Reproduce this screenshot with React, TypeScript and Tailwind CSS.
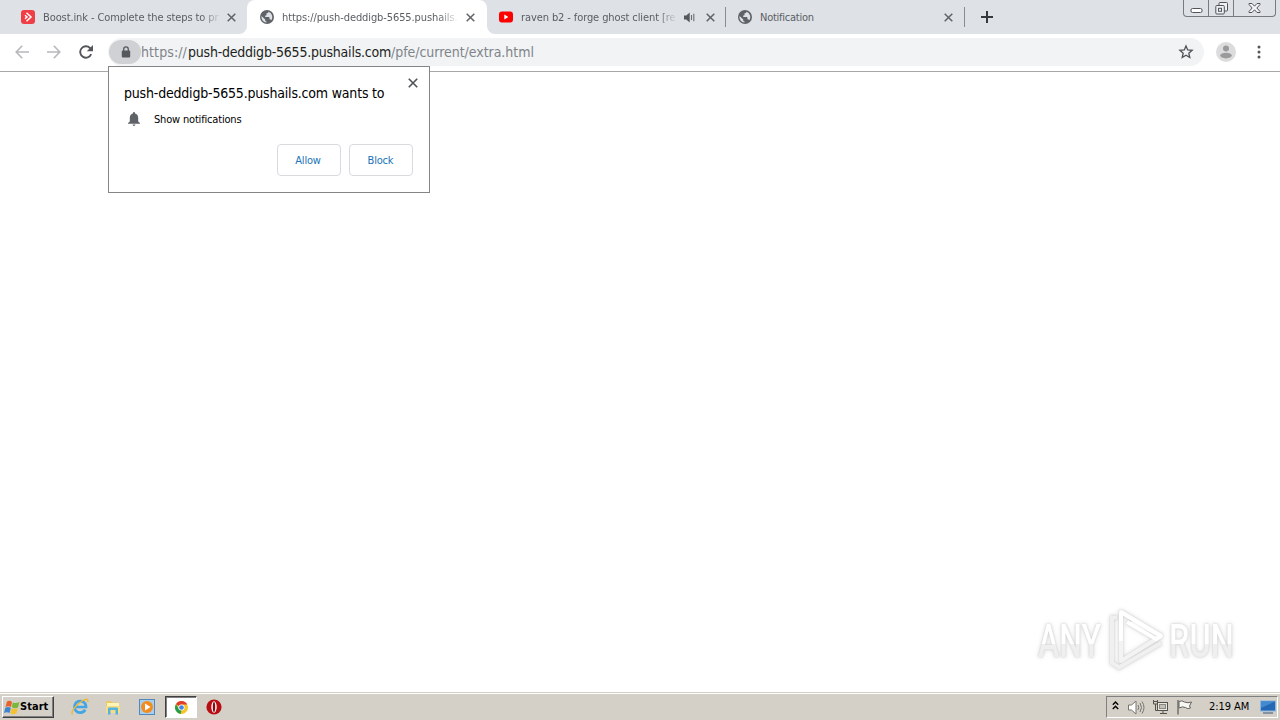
import React from "react";

const Close = ({ size = 9, color = "#5f6368" }: { size?: number; color?: string }) => (
  <svg width={size} height={size} viewBox="0 0 9 9" className="shrink-0">
    <path d="M.7.7l7.6 7.6M8.3.7L.7 8.3" stroke={color} strokeWidth="1.5" />
  </svg>
);

const Globe = () => (
  <svg width="14" height="14" viewBox="0 0 14 14" className="shrink-0">
    <circle cx="7" cy="7" r="7" fill="#5f6368" />
    <path d="M8.5 1.800c-.2 1-.8 1.500-2 1.500v1.400c0 .7-.6.9-1.300.9v1.300h3.400c.7 0 .9.5.9 1.200v1.200c.9 0 1.500.3 1.800.9A5.600 5.600 0 0 0 8.500 1.800z" fill="#dee1e6" />
    <path d="M1.500 5.900l3.700 3.700v.7c0 .8.6 1.300 1.400 1.300v1A5.600 5.600 0 0 1 1.500 5.900z" fill="#dee1e6" />
  </svg>
);

const Title = ({ children, className }: { children: React.ReactNode; className: string }) => (
  <span
    className={`pt-px whitespace-nowrap text-[11px] leading-[17px] text-[#5a5e63] ${className}`}
  >
    {children}
  </span>
);

const fade = "[mask-image:linear-gradient(to_right,#000_88%,transparent)]";

function TabStrip() {
  return (
    <div className="flex h-[34px] bg-[#dee1e6]">
      <div className="flex w-[247px] items-center pl-[21px]">
        <svg width="14" height="14" viewBox="0 0 14 14" className="shrink-0">
          <rect width="14" height="14" rx="3" fill="#ef3e46" />
          <path d="M5.500 2.800L10 7 5.500 11.200M4 5.200L6 7 4 8.800" fill="none" stroke="#fff" strokeWidth="1.500" />
        </svg>
        <Title className={`ml-2 w-[179px] tracking-[-0.1px] ${fade}`}>Boost.ink - Complete the steps to pr</Title>
        <span className="ml-[5px] flex"><Close /></span>
      </div>
      <div className="relative flex w-[240px] items-center rounded-t-lg bg-white pl-[13px]">
        <svg width="8" height="8" className="absolute bottom-0 -left-2"><path d="M8 0v8H0a8 8 0 0 0 8-8z" fill="#fff" /></svg>
        <svg width="8" height="8" className="absolute -right-2 bottom-0"><path d="M0 0v8h8a8 8 0 0 1-8-8z" fill="#fff" /></svg>
        <Globe />
        <Title className={`ml-2 w-[177px] tracking-[-0.1px] ${fade}`}>https://push-deddigb-5655.pushails.</Title>
        <span className="ml-[7px] flex"><Close /></span>
      </div>
      <div className="flex w-[238px] items-center pl-[12px]">
        <svg width="14" height="12" viewBox="0 0 15 12" preserveAspectRatio="none" className="shrink-0">
          <rect y=".5" width="15" height="11" rx="3" fill="#f00" />
          <path d="M5.700 3.500v5L10 6z" fill="#fff" />
        </svg>
        <Title className={`ml-[8px] w-[156px] tracking-[-0.1px] ${fade}`}>raven b2 - forge ghost client [re</Title>
        <svg width="11" height="11" viewBox="0 0 11 11" className="ml-[7px] shrink-0">
          <path d="M0 3.500h2.300L5.700.5v10L2.300 7.500H0z" fill="#54585d" />
          <path d="M7.500 3v5M9.800 1.800v7.400" stroke="#6b6f74" strokeWidth="1.100" />
        </svg>
        <span className="ml-[11px] flex"><Close /></span>
      </div>
      <div className="flex w-[240px] items-center">
        <div className="h-5 w-px bg-[#888c92]" />
        <span className="ml-[12px] flex"><Globe /></span>
        <Title className="ml-[8px] w-[176px] tracking-[-0.25px]">Notification</Title>
        <span className="ml-[8px] flex"><Close /></span>
        <div className="ml-[11px] h-5 w-px bg-[#888c92]" />
      </div>
      <svg width="12" height="12" viewBox="0 0 12 12" className="mt-[11px] ml-[16px]">
        <path d="M6 0v12M0 6h12" stroke="#35393d" strokeWidth="2" />
      </svg>
      <div className="mr-[4px] ml-auto flex h-[17px] w-[93px] rounded-b border border-t-0 border-[#777a80]">
        <div className="flex w-[25px] justify-center border-r border-[#777a80]">
          <svg width="13" height="16"><rect x="1" y="8.500" width="11" height="4" rx="1.500" fill="#fff" stroke="#50545a" /></svg>
        </div>
        <div className="flex w-[25px] justify-center border-r border-[#777a80]">
          <svg width="13" height="16" fill="#eef0f3" stroke="#50545a">
            <rect x="4" y="2.500" width="8.500" height="8.500" rx="1" />
            <rect x=".8" y="5.500" width="8.500" height="8.500" rx="1" />
            <rect x="3.500" y="8.300" width="3" height="3" />
          </svg>
        </div>
        <div className="flex flex-1 justify-center">
          <svg width="13" height="16">
            <path d="M1 3.500h3l2.500 2.700L9 3.500h3v1L8.800 8l3.200 3.500v1H9L6.500 9.800 4 12.500H1v-1L4.200 8 1 4.500z" fill="#f5f5f7" stroke="#50545a" />
          </svg>
        </div>
      </div>
    </div>
  );
}

function Toolbar() {
  return (
    <div className="flex h-[38px] items-center border-b border-[#a8a8a8] bg-white pb-px">
      <svg width="14" height="14" viewBox="0 0 14 14" className="ml-[15px]" fill="none" stroke="#b6b8ba" strokeWidth="1.600">
        <path d="M14 7H1.500M7.200.8L1.200 7l6 6.200" />
      </svg>
      <svg width="14" height="14" viewBox="0 0 14 14" className="ml-[18px]" fill="none" stroke="#b6b8ba" strokeWidth="1.600">
        <path d="M0 7h12.500M6.800.8l6 6.200-6 6.200" />
      </svg>
      <svg width="14" height="14" viewBox="0 0 14 14" className="ml-[18px]">
        <path d="M12.200 9.200A5.700 5.700 0 1 1 11 3l1.200 1.200" fill="none" stroke="#53575b" strokeWidth="1.900" />
        <path d="M14 0v6.200H7.800z" fill="#53575b" />
      </svg>
      <div className="ml-[15px] flex h-[28px] w-[1096px] items-center rounded-full bg-[#f1f3f4] pl-px">
        <div className="flex h-[24px] w-[32px] shrink-0 items-center justify-center rounded-full bg-[#cfd1d4]">
          <svg width="10" height="12" viewBox="0 0 10 12" className="ml-px">
            <path d="M2.700 5V3.200a2.300 2.300 0 0 1 4.600 0V5" fill="none" stroke="#55595e" strokeWidth="1.300" />
            <rect x=".8" y="4.400" width="8.400" height="7.200" rx="1" fill="#55595e" />
          </svg>
        </div>
        <div className="flex text-[14px] leading-[20px] whitespace-nowrap text-[#80848a]">
          <span className="w-[47px] tracking-[0.1px]">https://</span>
          <span className="w-[203px] tracking-[-0.22px] text-[#1d1f22]">push-deddigb-5655.pushails.com</span>
          <span className="tracking-[-0.04px]">/pfe/current/extra.html</span>
        </div>
        <svg width="16" height="16" viewBox="0 0 16 16" className="mr-[10px] ml-auto">
          <path d="M8 1.900l1.700 4 4.400.4-3.300 2.900 1 4.300L8 11.300l-3.800 2.200 1-4.300-3.300-2.900 4.400-.4z" fill="none" stroke="#4e5256" strokeWidth="1.300" />
        </svg>
      </div>
      <svg width="20" height="20" viewBox="0 0 20 20" className="ml-[12px]">
        <circle cx="10" cy="10" r="10" fill="#dcdcdd" />
        <circle cx="10" cy="6.500" r="3" fill="#9a9a9c" />
        <ellipse cx="10" cy="13.600" rx="5.800" ry="2.800" fill="#9a9a9c" />
      </svg>
      <svg width="4" height="14" viewBox="0 0 4 14" className="ml-[21px]" fill="#53575b">
        <circle cx="2" cy="2" r="1.500" /><circle cx="2" cy="7" r="1.500" /><circle cx="2" cy="12" r="1.500" />
      </svg>
    </div>
  );
}

function PermissionPrompt() {
  return (
    <div className="absolute top-[66px] left-[108px] flex h-[127px] w-[322px] flex-col border border-[#858585] bg-white pr-4 pl-[15px] text-black">
      <div className="flex justify-between">
        <h1 className="mt-[16px] text-[14px] leading-[20px] tracking-[-0.19px] whitespace-nowrap">push-deddigb-5655.pushails.com wants to</h1>
        <span className="mt-[11px] -mr-[5px] flex h-[11px]"><Close size={10} color="#505458" /></span>
      </div>
      <div className="mt-[8px] flex h-[16px] items-center">
        <svg width="12" height="14" viewBox="0 0 12 14" className="ml-[4px]" fill="#5f6368">
          <path d="M6 0a1 1 0 0 1 1 1v.5c2 .5 3.200 2 3.200 4.200V9.500L12 11v.8H0V11l1.800-1.500V5.700C1.800 3.500 3 2 5 1.500V1a1 1 0 0 1 1-1zM4.600 12.500h2.800a1.400 1.400 0 0 1-2.800 0z" />
        </svg>
        <span className="ml-[14px] pt-[2px] text-[11px] tracking-[-0.18px]">Show notifications</span>
      </div>
      <div className="mt-[17px] flex justify-end gap-2 text-[11px] tracking-[-0.2px] text-[#1a73b8]">
        <button className="h-[32px] w-[64px] rounded border border-[#d8dade] pt-[2px] pr-[2px]">Allow</button>
        <button className="h-[32px] w-[64px] rounded border border-[#d8dade] pt-[2px] pr-px">Block</button>
      </div>
    </div>
  );
}

function Watermark() {
  const word = "inline-block origin-left text-[47px] leading-[60px] font-medium text-transparent bg-linear-to-b from-white from-55% to-[#efefef] to-55% bg-clip-text";
  return (
    <div className="absolute top-[607px] left-[1038px] flex h-[66px] w-[200px] items-center font-[Roboto,sans-serif] [filter:drop-shadow(0_0_1px_#cecece)_drop-shadow(0_0_2px_#e2e2e2)]">
      <div className="w-[69px] pt-[2px]"><span className={`${word} scale-x-[0.68]`}>ANY</span></div>
      <svg width="58" height="66" viewBox="0 0 58 66" className="shrink-0" fill="none" strokeWidth="4" strokeLinejoin="round">
        <path d="M10 10.500H5V56l6 3.500M10 61.500L54 36" stroke="#f0f0f0" />
        <path d="M14 34V5l40 24" stroke="#fff" />
        <path d="M14 34v20l40-25L25 14" stroke="#f3f3f3" />
        <path d="M14 5l40 24-5 3-29-17" stroke="#fff" />
      </svg>
      <div className="ml-[4px] w-[66px] pt-[2px]"><span className={`${word} scale-x-[0.69]`}>RUN</span></div>
    </div>
  );
}

function Taskbar() {
  return (
    <div className="relative flex h-[28px] items-center border-t border-[#d4d0c8] bg-[#d4d0c8] pt-px text-black shadow-[inset_0_1px_0_#fff]">
      <button className="ml-[2px] flex h-[22px] w-[52px] items-center border border-t-white border-r-[#404040] border-b-[#404040] border-l-white pl-px shadow-[inset_-1px_-1px_0_#808080]">
        <svg width="16" height="15" viewBox="0 0 16 15" className="shrink-0">
          <path d="M3 1.500Q6 0 8 2L7 7Q4.500 5.500 1.500 7z" fill="#e8622c" />
          <path d="M8.800 2.400Q12 4 15.500 2L14 7.500Q11 9 7.800 7.300z" fill="#78b83c" />
          <path d="M1.300 7.800Q4.300 6.300 6.800 8L5.600 13Q3 11.500 0 13z" fill="#3d86cf" />
          <path d="M7.600 8.300Q11 9.800 13.800 8.300L12.500 13.300Q9.500 15 6.400 13.400z" fill="#f4c231" />
        </svg>
        <span className="pt-px text-[11px] font-bold tracking-[0.05px]">Start</span>
      </button>
      <svg width="18" height="18" viewBox="0 0 18 18" className="ml-[17px]">
        <path d="M14.200 11.800A5.800 5.800 0 1 1 15 9H5" fill="none" stroke="#42a5e4" strokeWidth="2.700" />
        <path d="M1.500 16.500C-1 14 6 6 11 3s6.500-2 5.500 1" fill="none" stroke="#eab83b" strokeWidth="1.400" />
      </svg>
      <svg width="16" height="16" viewBox="0 0 16 16" className="ml-[16px]">
        <path d="M1 2h5l1 1.500h7V14H1z" fill="#e9c963" />
        <path d="M2 4h12v4H2z" fill="#fff4b8" />
        <path d="M1 7h14v7H1z" fill="#f5dd86" />
        <path d="M3 15.500V9.500q0-1 1-1h8q1 0 1 1v6h-2.500V11h-5v4.500z" fill="#54b3dd" />
      </svg>
      <svg width="16" height="16" viewBox="0 0 16 16" className="ml-[18px]">
        <rect x=".5" y=".5" width="15" height="15" fill="#a9cfed" stroke="#5288bd" />
        <circle cx="8" cy="8" r="6" fill="#f28c20" />
        <path d="M6 4.500v7L11.500 8z" fill="#fff" />
      </svg>
      <div className="ml-[10px] flex h-[22px] w-[32px] items-center justify-center border border-t-[#404040] border-r-white border-b-white border-l-[#404040] bg-white shadow-[inset_1px_1px_0_#808080]">
        <svg width="13" height="13" viewBox="0 0 14 14">
          <circle cx="7" cy="7" r="7" fill="#f6c526" />
          <path d="M7 7L1 3.500a7 7 0 0 1 12.200.3H7z" fill="#e33b2e" />
          <path d="M1 3.500L4.300 9 7 10.200 6 14A7 7 0 0 1 1 3.500z" fill="#279b4c" />
          <circle cx="7" cy="7" r="3.300" fill="#fff" />
          <circle cx="7" cy="7" r="2.500" fill="#4285e8" />
        </svg>
      </div>
      <svg width="16" height="16" viewBox="0 0 16 16" className="ml-[9px]">
        <circle cx="8" cy="8" r="7.600" fill="#b70d13" />
        <ellipse cx="8" cy="8" rx="2.700" ry="5.800" fill="#fff" />
        <ellipse cx="8" cy="8" rx="1.200" ry="5" fill="#8e090d" />
      </svg>
      <div className="mr-[2px] ml-auto flex h-[22px] w-[172px] items-center border border-t-[#808080] border-r-white border-b-white border-l-[#808080]">
        <svg width="7" height="9" viewBox="0 0 7 9" className="mb-[3px] ml-[5px]" fill="none" stroke="#000" strokeWidth="1.400">
          <path d="M.8 3.700L3.500 1l2.700 2.700M.8 8L3.500 5.300 6.200 8" />
        </svg>
        <svg width="17" height="15" viewBox="0 0 17 15" className="ml-[9px]" fill="none" stroke="#77746f">
          <path d="M.5 5h3L8 1v13l-4.500-4h-3z" fill="#fff" />
          <path d="M10 5q1.500 2.500 0 5M12 3q3 4.500 0 9M14 1.500q4 6 0 12" />
        </svg>
        <svg width="17" height="16" viewBox="0 0 17 16" className="ml-[7px]" stroke="#55524e">
          <rect x="5.500" y="3.500" width="10" height="8" fill="#e9e7e2" />
          <rect x="7.500" y="5.500" width="6" height="4" fill="#c3c0ba" stroke="#8b8882" />
          <path d="M8 14.500h7M11 12v2" />
          <path d="M1.500 1v4h4V1M1 2.500h5M3.500 5v6.500h2" fill="none" />
        </svg>
        <svg width="17" height="16" viewBox="0 0 16 16" className="ml-[7px]" stroke="#64615c">
          <path d="M2.500 2.500q3-1.500 5.500.5 3.500 1.500 7 0l-2 4 1 2q-3 1.500-5-.5-3-1.500-6.500.5z" fill="#f7f6f3" />
          <path d="M1.500 1v14.500" strokeWidth="1.300" />
        </svg>
        <span className="ml-[16px] w-[42px] pt-px text-[11px] tracking-[-0.05px] whitespace-nowrap">2:19 AM</span>
        <svg width="16" height="14" viewBox="0 0 16 14" className="ml-[9px] shrink-0">
          <rect x=".5" y="1" width="15" height="10" fill="#2367b5" stroke="#8cb5dc" />
          <path d="M1 1.500h14L1 8z" fill="#438ad0" />
          <path d="M3 13h10" stroke="#35567b" />
        </svg>
      </div>
    </div>
  );
}

export default function App() {
  return (
    <div className="relative flex h-[720px] w-[1280px] flex-col overflow-hidden bg-white font-['DejaVu_Sans_Condensed','DejaVu_Sans',sans-serif]">
      <TabStrip />
      <Toolbar />
      <main className="flex-1 bg-white" />
      <Taskbar />
      <PermissionPrompt />
      <Watermark />
    </div>
  );
}
